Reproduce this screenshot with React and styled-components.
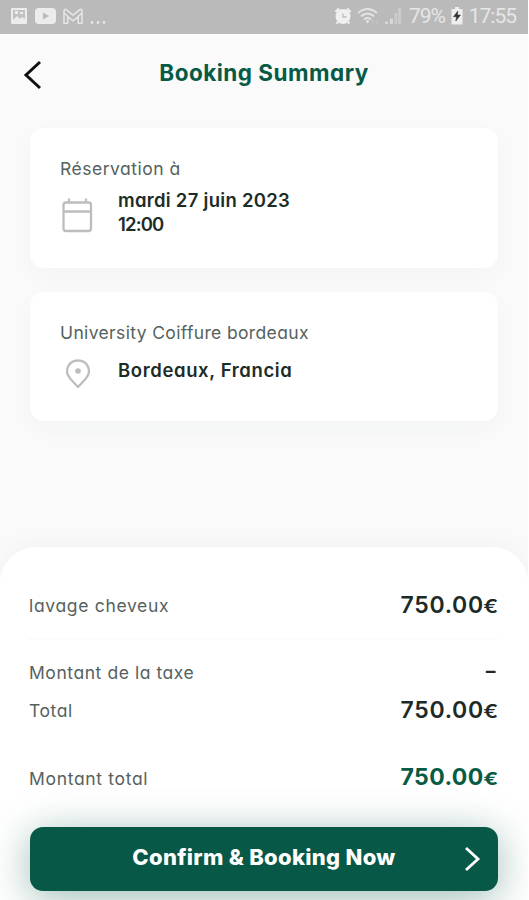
import React from "react";
import styled, { createGlobalStyle } from "styled-components";

const GlobalStyle = createGlobalStyle`
  * { box-sizing: border-box; }
  body {
    margin: 0;
    background: #fff;
    font-family: Inter, "Liberation Sans", sans-serif;
    font-feature-settings: "cv11" 1;
  }
`;

const Screen = styled.div`
  display: flex;
  flex-direction: column;
  width: 528px;
  height: 900px;
  overflow: hidden;
  background: #fafafa;
`;

const StatusBar = styled.div`
  display: flex;
  justify-content: space-between;
  height: 34px;
  flex: none;
  padding: 0 12px 0 10px;
  background: #bababa;
  color: #e6e6e6;
`;

const StatusGroup = styled.div`
  display: flex;
  align-items: center;
  height: 32px;
`;

const StatusText = styled.span`
  font: 400 21px/24px Roboto, sans-serif;
  letter-spacing: ${(p) => p.$spacing || 0}px;
  margin-left: ${(p) => p.$left || 0}px;
  white-space: nowrap;
`;

const Icon = styled.svg`
  display: block;
  flex: none;
  margin-left: ${(p) => p.$left || 0}px;
`;

const Header = styled.header`
  display: grid;
  grid-template-columns: 60px 1fr 60px;
  align-items: center;
  height: 94px;
  flex: none;
  padding-bottom: 16px;
`;

const BackButton = styled.button`
  display: flex;
  width: 44px;
  height: 44px;
  margin: 4px 0 0 11px;
  padding: 0;
  border: 0;
  background: none;
  align-items: center;
  justify-content: center;
`;

const Title = styled.h1`
  margin: 0;
  color: #075b45;
  text-align: center;
  font-size: 22.5px;
  font-weight: 700;
  line-height: 32px;
  letter-spacing: ${(p) => p.$spacing || 0}px;
  white-space: nowrap;
`;

const Cards = styled.main`
  display: flex;
  flex-direction: column;
  gap: 24px;
  padding: 0 30px;
  height: 419px;
  flex: none;
`;

const Card = styled.section`
  height: ${(p) => p.$height}px;
  padding: 29px 31px 0 30px;
  border-radius: 14px;
  background: #fff;
  box-shadow: 0 8px 24px rgba(20, 60, 50, 0.03);
`;

const Label = styled.div`
  color: #55625e;
  font-size: 17.5px;
  font-weight: 400;
  line-height: 24px;
  letter-spacing: ${(p) => p.$spacing || 0}px;
  white-space: nowrap;
`;

const CardRow = styled.div`
  display: grid;
  grid-template-columns: 34px 1fr;
  column-gap: 24px;
  margin-top: ${(p) => p.$top}px;
`;

const IconSlot = styled.div`
  padding-top: ${(p) => p.$top}px;
`;

const Value = styled.div`
  color: #1c2d28;
  font-size: 18.5px;
  font-weight: 600;
  line-height: 24px;
  letter-spacing: ${(p) => p.$spacing || 0}px;
  white-space: nowrap;
`;

const Sheet = styled.section`
  display: flex;
  flex-direction: column;
  flex: 1;
  padding: 42px 30px 0 29px;
  border-radius: 36px 36px 0 0;
  background: #fff;
  box-shadow: 0 -6px 24px rgba(0, 0, 0, 0.03);
`;

const PriceRow = styled.div`
  display: flex;
  align-items: center;
  justify-content: space-between;
  flex: none;
  height: ${(p) => p.$height}px;
`;

const Divider = styled.hr`
  width: 100%;
  height: 2px;
  flex: none;
  margin: 15px 0 14px;
  border: 0;
  background: #fafbfb;
`;

const Price = styled.div`
  padding-bottom: ${(p) => (p.$total ? 3 : 2)}px;
  color: ${(p) => (p.$total ? "#075b45" : "#1c2b27")};
  font-size: 23px;
  font-weight: ${(p) => (p.$total ? 700 : 600)};
  line-height: 34px;
  letter-spacing: ${(p) => p.$spacing || 0}px;
  white-space: nowrap;
`;

const Euro = styled.span`
  display: inline-block;
  margin-left: 2px;
  font-size: 18px;
  line-height: 1;
  letter-spacing: 0;
  transform: scaleX(1.22);
  transform-origin: right;
`;

const NoTax = styled.span`
  display: block;
  font-weight: 500;
  transform: translateY(-1px) scaleX(1.3);
  transform-origin: right;
`;

const ConfirmButton = styled.button`
  display: grid;
  grid-template-columns: 53px 1fr 53px;
  align-items: center;
  width: 468px;
  height: 64px;
  flex: none;
  margin: 0 0 0 1px;
  padding: 0;
  border: 0;
  border-radius: 13px;
  background: #075846;
  color: #fff;
  box-shadow: 0 7px 42px rgba(7, 88, 70, 0.4);
  font-family: inherit;
  font-feature-settings: inherit;
`;

const ButtonText = styled.span`
  padding-bottom: 5px;
  font-size: 22px;
  font-weight: 800;
  line-height: 32px;
  letter-spacing: ${(p) => p.$spacing || 0}px;
  white-space: nowrap;
`;

const PictureIcon = () => (
  <Icon width="18" height="18" viewBox="0 0 18 18">
    <rect x="1" y="1" width="16" height="16" rx="1" fill="#ececec" />
    <path d="M3 3h12v9l-3-2-2 2-3-3-4 4z" fill="#c2c2c2" />
    <path d="M5 4h3v3H5zM10 5h3v2h-3z" fill="#ececec" />
  </Icon>
);

const VideoIcon = () => (
  <Icon $left={7} width="21" height="16" viewBox="0 0 21 16">
    <rect width="21" height="16" rx="4" fill="#ececec" />
    <path d="M8 4.5v7l6-3.5z" fill="#bababa" />
  </Icon>
);

const MailIcon = () => (
  <Icon $left={7} width="20" height="17" viewBox="0 0 21 17" fill="none" stroke="#e6e6e6" strokeWidth="1.6" strokeLinejoin="round">
    <path d="M1 15.5V3q0-2 2-2l7.5 6L18 1q2 0 2 2v12.5h-4V8.5l-5.5 4.5L5 8.5v7zM1 4.5l4 4M20 4.5l-4 4" />
  </Icon>
);

const DotsIcon = () => (
  <Icon $left={6} width="18" height="18" viewBox="0 0 18 18" fill="#e5e5e5">
    <circle cx="3" cy="15.5" r="1.4" />
    <circle cx="9" cy="15.5" r="1.4" />
    <circle cx="15" cy="15.5" r="1.4" />
  </Icon>
);

const AlarmIcon = () => (
  <Icon width="18" height="18" viewBox="0 0 18 18">
    <circle cx="9" cy="9.5" r="7.5" fill="#f0f0f0" />
    <path d="M1.5 5L5 1.5M16.5 5L13 1.5M4 15l-1.5 1.5M14 15l1.5 1.5" stroke="#f0f0f0" strokeWidth="2.4" />
    <path d="M9 6.5V10h3.5" stroke="#bdbdbd" strokeWidth="1.3" fill="none" />
  </Icon>
);

const WifiIcon = () => (
  <Icon $left={5} width="23" height="18" viewBox="0 0 23 18" fill="none" stroke="#e4e4e4" strokeWidth="1.8">
    <path d="M1 6Q10.5-2 20 6M4 9.3q6.5-5.5 13 0M7 12.5q3.5-3 7 0" />
    <path d="M8.5 13.5h4l-2 3z" fill="#e8e8e8" stroke="none" />
    <path d="M16 13v4M20 13v4" stroke="#c6c6c6" strokeWidth="1.4" />
  </Icon>
);

const SignalIcon = () => (
  <Icon $left={4} width="18" height="18" viewBox="0 0 18 18">
    <path d="M1 14.5h3V17H1zM6 11.5h3V17H6z" fill="#d8d8d8" />
    <path d="M10.5 6h2.7v11h-2.7zM14 1h3.2v16H14z" fill="#cbcbcb" />
  </Icon>
);

const BatteryIcon = () => (
  <Icon $left={6} width="12" height="18" viewBox="0 0 12 18">
    <path d="M4 0h4v2h3.5v15.5H.5V2H4z" fill="#eee" />
    <path d="M6.8 4L2.5 9.7h3L4.8 14 9.5 8H6.4z" fill="#303030" stroke="#303030" strokeWidth=".5" />
  </Icon>
);

const BackIcon = () => (
  <Icon width="20" height="30" viewBox="0 0 20 30" fill="none" stroke="#111" strokeWidth="3">
    <path d="M17 2L3 15l14 13" />
  </Icon>
);

const CalendarIcon = () => (
  <Icon width="34" height="36" viewBox="0 0 34 36" fill="none" stroke="#bdbdbd" strokeWidth="2.3">
    <rect x="3.500" y="5.500" width="27.5" height="28.5" rx="2.5" />
    <path d="M3.500 14.500h27.5M9 1.500v4M26 1.500v4" />
  </Icon>
);

const PinIcon = () => (
  <Icon width="34" height="32" viewBox="0 0 34 32" fill="none" stroke="#bdbdbd" strokeWidth="2.3">
    <path d="M18 28L10.5 20C3 11.5 9 1.5 18 1.5S33 11.5 25.5 20z" strokeLinejoin="round" />
    <circle cx="18" cy="12" r="2.8" fill="#bdbdbd" stroke="none" />
  </Icon>
);

const NextIcon = () => (
  <Icon $left={18} width="18" height="28" viewBox="0 0 18 28" fill="none" stroke="#fff" strokeWidth="2.8">
    <path d="M3 3L15 14 3 25" />
  </Icon>
);

const Amount = ({ total }) => (
  <Price $total={total} $spacing={total ? 0.4 : 0.7}>
    750.00<Euro>€</Euro>
  </Price>
);

export default function App() {
  return (
    <>
      <GlobalStyle />
      <Screen>
        <StatusBar>
          <StatusGroup>
            <PictureIcon />
            <VideoIcon />
            <MailIcon />
            <DotsIcon />
          </StatusGroup>
          <StatusGroup>
            <AlarmIcon />
            <WifiIcon />
            <SignalIcon />
            <StatusText $left={7} $spacing={-1.1}>79%</StatusText>
            <BatteryIcon />
            <StatusText $left={6} $spacing={-1}>17:55</StatusText>
          </StatusGroup>
        </StatusBar>
        <Header>
          <BackButton aria-label="Back">
            <BackIcon />
          </BackButton>
          <Title $spacing={0.48}>Booking Summary</Title>
        </Header>
        <Cards>
          <Card $height={140}>
            <Label $spacing={0.5}>Réservation à</Label>
            <CardRow $top={7}>
              <IconSlot $top={9}><CalendarIcon /></IconSlot>
              <div>
                <Value $spacing={0.28}>mardi 27 juin 2023</Value>
                <Value $spacing={-0.85}>12:00</Value>
              </div>
            </CardRow>
          </Card>
          <Card $height={129}>
            <Label $spacing={0.36}>University Coiffure bordeaux</Label>
            <CardRow $top={13}>
              <IconSlot $top={1}><PinIcon /></IconSlot>
              <Value $spacing={0.62}>Bordeaux, Francia</Value>
            </CardRow>
          </Card>
        </Cards>
        <Sheet>
          <PriceRow $height={34}>
            <Label $spacing={0.67}>lavage cheveux</Label>
            <Amount />
          </PriceRow>
          <Divider />
          <PriceRow $height={38}>
            <Label $spacing={0.56}>Montant de la taxe</Label>
            <Price><NoTax>-</NoTax></Price>
          </PriceRow>
          <PriceRow $height={38}>
            <Label $spacing={0.6}>Total</Label>
            <Amount />
          </PriceRow>
          <PriceRow $height={97}>
            <Label $spacing={0.68}>Montant total</Label>
            <Amount total />
          </PriceRow>
          <ConfirmButton>
            <span />
            <ButtonText $spacing={0.3}>Confirm &amp; Booking Now</ButtonText>
            <NextIcon />
          </ConfirmButton>
        </Sheet>
      </Screen>
    </>
  );
}
